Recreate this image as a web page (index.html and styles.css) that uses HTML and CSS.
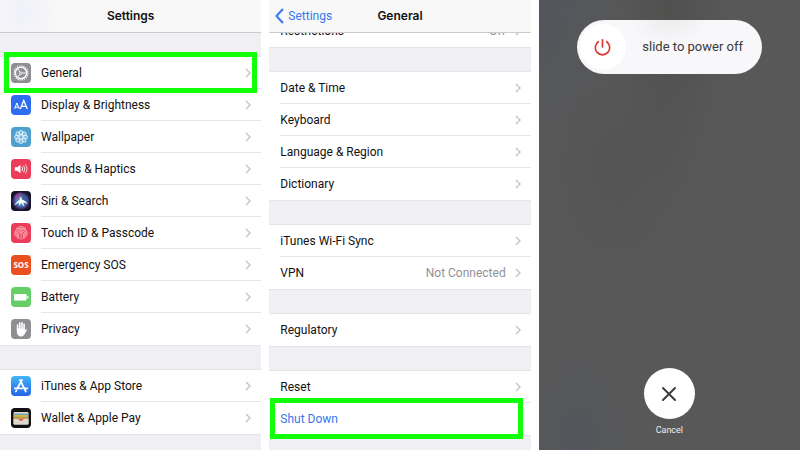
FILE: index.html
```
<!DOCTYPE html>
<html lang="en">
<head>
    <meta charset="UTF-8">
    <meta name="viewport" content="width=device-width, initial-scale=1.0">
    <title>Shut Down from Settings</title>
    <link rel="stylesheet" href="styles.css">
</head>
<body>
    <svg width="0" height="0" class="defs" aria-hidden="true">
        <symbol id="chevron" viewBox="0 0 6 10">
            <path d="M1 1l4 4-4 4" fill="none" stroke="currentColor" stroke-width="1.4"/>
        </symbol>
    </svg>

    <main class="screens">
        <!-- Settings -->
        <section class="screen">
            <header class="navbar tinted"><h1>Settings</h1></header>
            <div class="content">
                <ul class="group first">
                    <li class="highlight"><a class="row" href="#general">
                        <svg class="icon" viewBox="0 0 20 20"><rect width="20" height="20" rx="4" fill="#8e8e93"/><circle cx="10" cy="10" r="7" fill="none" stroke="#fff" stroke-width="1.2" stroke-dasharray="1.2 1"/><circle cx="10" cy="10" r="5.7" fill="none" stroke="#fff" stroke-width="1.5"/><path d="M9.5 10L6.8 5.8M9.5 10L6.8 14.2M10 10h5" stroke="#fff" stroke-width=".9"/><circle cx="10" cy="10" r="1.5" fill="#fff"/><circle cx="10" cy="10" r=".8" fill="#8e8e93"/></svg>
                        <span class="cell"><span>General</span><svg class="chevron"><use href="#chevron"/></svg></span></a></li>
                    <li><a class="row" href="#display">
                        <svg class="icon" viewBox="0 0 20 20"><rect width="20" height="20" rx="4" fill="#2f6df0"/><g fill="none" stroke="#fff"><path d="M3.5 14l2.4-6 2.4 6M4.3 12.2h3.2" stroke-width="1"/><path d="M9.3 14l3.5-8.6 3.5 8.6M10.5 11.4h4.6" stroke-width="1.3"/></g></svg>
                        <span class="cell"><span>Display &amp; Brightness</span><svg class="chevron"><use href="#chevron"/></svg></span></a></li>
                    <li><a class="row" href="#wallpaper">
                        <svg class="icon" viewBox="0 0 20 20"><rect width="20" height="20" rx="4" fill="#4fa0cf"/><g fill="#ffffff44" stroke="#e6f6ff" stroke-width=".8"><circle cx="10" cy="5.5" r="2"/><circle cx="13.2" cy="6.8" r="2"/><circle cx="14.5" cy="10" r="2"/><circle cx="13.2" cy="13.2" r="2"/><circle cx="10" cy="14.5" r="2"/><circle cx="6.8" cy="13.2" r="2"/><circle cx="5.5" cy="10" r="2"/><circle cx="6.8" cy="6.8" r="2"/><circle cx="10" cy="10" r="2.2"/></g></svg>
                        <span class="cell"><span>Wallpaper</span><svg class="chevron"><use href="#chevron"/></svg></span></a></li>
                    <li><a class="row" href="#sounds">
                        <svg class="icon" viewBox="0 0 20 20"><rect width="20" height="20" rx="4" fill="#eb3d59"/><path d="M3.8 8.3h2.4l3.3-2.5v8.4l-3.3-2.5H3.8z" fill="#fff"/><g fill="none" stroke="#fff" stroke-width=".9" stroke-linecap="round"><path d="M11.2 8.2q1.2 1.8 0 3.6"/><path d="M12.9 6.9q2.1 3.1 0 6.2" opacity=".9"/><path d="M14.6 5.6q3 4.4 0 8.8" opacity=".8"/></g></svg>
                        <span class="cell"><span>Sounds &amp; Haptics</span><svg class="chevron"><use href="#chevron"/></svg></span></a></li>
                    <li><a class="row" href="#siri">
                        <svg class="icon" viewBox="0 0 20 20"><defs><radialGradient id="orb"><stop offset="0" stop-color="#e9f6ff"/><stop offset=".35" stop-color="#55a5cc"/><stop offset=".75" stop-color="#4b4590"/><stop offset="1" stop-color="#1c1b38"/></radialGradient></defs><rect width="20" height="20" rx="4" fill="#15152c"/><circle cx="10" cy="10" r="9" fill="url(#orb)"/><path d="M3 6q3-5 8-4-4 3-3 7z" fill="#b3449c" opacity=".65"/><path d="M12 3q5 2 5 8-4-2-6-2z" fill="#37518f" opacity=".8"/><path d="M3 14.5q3-4.5 6.2-5.2L9 5.8l2.2 3q3.5.7 5.8 4.2l-4.7-2 1.2 5.2-3.2-4.6-2.5 3.5.4-3.8z" fill="#fff"/></svg>
                        <span class="cell"><span>Siri &amp; Search</span><svg class="chevron"><use href="#chevron"/></svg></span></a></li>
                    <li><a class="row" href="#touchid">
                        <svg class="icon" viewBox="0 0 20 20"><rect width="20" height="20" rx="4" fill="#eb3d59"/><g fill="none" stroke="#ffc0c9" stroke-width=".8" stroke-linecap="round"><path d="M5.2 5.8q4.8-4.8 9.6 0"/><path d="M3.8 11.5Q3.4 5.3 10 5.2t6.2 6.3"/><path d="M5 13.5Q3.6 6.8 10 6.6t5 6.9"/><path d="M6.4 14.9Q4.6 8.1 10 8t3.6 6.9"/><path d="M7.9 15.8Q6.3 9.5 10 9.4t2.1 6.4"/><path d="M10 10.8v5.5"/></g></svg>
                        <span class="cell"><span>Touch ID &amp; Passcode</span><svg class="chevron"><use href="#chevron"/></svg></span></a></li>
                    <li><a class="row" href="#sos">
                        <svg class="icon" viewBox="0 0 20 20"><rect width="20" height="20" rx="4" fill="#ea501f"/><text x="10" y="13" text-anchor="middle" class="sos">SOS</text></svg>
                        <span class="cell"><span>Emergency SOS</span><svg class="chevron"><use href="#chevron"/></svg></span></a></li>
                    <li><a class="row" href="#battery">
                        <svg class="icon" viewBox="0 0 20 20"><rect width="20" height="20" rx="4" fill="#67ce67"/><rect x="3" y="7" width="12.6" height="6.4" rx="1" fill="#fff"/><path d="M16.2 8.8q1.4.2 1.4 1.4t-1.4 1.4z" fill="#fff"/></svg>
                        <span class="cell"><span>Battery</span><svg class="chevron"><use href="#chevron"/></svg></span></a></li>
                    <li><a class="row" href="#privacy">
                        <svg class="icon" viewBox="0 0 20 20"><rect width="20" height="20" rx="4" fill="#8e8e93"/><path d="M6.6 10.5V6M8.8 9.5V4M11 9.5V3.8M13.1 10V5.2" stroke="#fff" stroke-width="1.6" stroke-linecap="round"/><path d="M5.8 9.5h8.1v2.1l1-1.2q1-.7 1.2.2l-2.7 5q-1 2-3 2H9.2q-3.4-1-3.4-5z" fill="#fff"/></svg>
                        <span class="cell"><span>Privacy</span><svg class="chevron"><use href="#chevron"/></svg></span></a></li>
                </ul>
                <ul class="group">
                    <li><a class="row" href="#appstore">
                        <svg class="icon" viewBox="0 0 20 20"><defs><linearGradient id="store" x2="0" y2="1"><stop stop-color="#43b5f5"/><stop offset="1" stop-color="#2364e8"/></linearGradient></defs><rect width="20" height="20" rx="4" fill="url(#store)"/><g stroke="#fff" stroke-width="1.7" stroke-linecap="round"><path d="M11 4L6.5 12M9 4l5.8 11.5M3.8 12.4h7.4M14 12.4h2.3M5.5 14.4l-.7 1.2"/></g></svg>
                        <span class="cell"><span>iTunes &amp; App Store</span><svg class="chevron"><use href="#chevron"/></svg></span></a></li>
                    <li><a class="row" href="#wallet">
                        <svg class="icon" viewBox="0 0 20 20"><rect width="20" height="20" rx="4" fill="#111"/><rect x="2.5" y="4" width="15" height="12.5" rx="1.2" fill="#ddd9ce"/><path d="M3 5.5h14v2H3z" fill="#6aa5c2"/><path d="M3 7h14v2H3z" fill="#d9b64b"/><path d="M3 8.7h14v2H3z" fill="#a9a450"/><path d="M3 10.4h14v1H3z" fill="#df7d50"/><path d="M2.5 11h4.6q.8 2.4 2.9 2.4t2.9-2.4h4.6v4.3q0 1.2-1.2 1.2H3.7q-1.2 0-1.2-1.2z" fill="#ddd9ce"/><path d="M7.5 11h5q-.7 2-2.5 2t-2.5-2" fill="#df6645"/></svg>
                        <span class="cell"><span>Wallet &amp; Apple Pay</span><svg class="chevron"><use href="#chevron"/></svg></span></a></li>
                </ul>
            </div>
        </section>

        <!-- General -->
        <section class="screen">
            <header class="navbar">
                <a class="back" href="#settings"><svg viewBox="0 0 9 16"><path d="M8 1L1.5 8 8 15" fill="none" stroke="currentColor" stroke-width="2"/></svg>Settings</a>
                <h1>General</h1>
            </header>
            <div class="content scrolled">
                <ul class="group">
                    <li><a class="row" href="#restrictions"><span class="cell"><span>Restrictions</span><span class="value">Off</span><svg class="chevron"><use href="#chevron"/></svg></span></a></li>
                </ul>
                <ul class="group">
                    <li><a class="row" href="#date"><span class="cell"><span>Date &amp; Time</span><svg class="chevron"><use href="#chevron"/></svg></span></a></li>
                    <li><a class="row" href="#keyboard"><span class="cell"><span>Keyboard</span><svg class="chevron"><use href="#chevron"/></svg></span></a></li>
                    <li><a class="row" href="#language"><span class="cell"><span>Language &amp; Region</span><svg class="chevron"><use href="#chevron"/></svg></span></a></li>
                    <li><a class="row" href="#dictionary"><span class="cell"><span>Dictionary</span><svg class="chevron"><use href="#chevron"/></svg></span></a></li>
                </ul>
                <ul class="group">
                    <li><a class="row" href="#sync"><span class="cell"><span>iTunes Wi-Fi Sync</span><svg class="chevron"><use href="#chevron"/></svg></span></a></li>
                    <li><a class="row" href="#vpn"><span class="cell"><span>VPN</span><span class="value">Not Connected</span><svg class="chevron"><use href="#chevron"/></svg></span></a></li>
                </ul>
                <ul class="group">
                    <li><a class="row" href="#regulatory"><span class="cell"><span>Regulatory</span><svg class="chevron"><use href="#chevron"/></svg></span></a></li>
                </ul>
                <ul class="group">
                    <li><a class="row" href="#reset"><span class="cell"><span>Reset</span><svg class="chevron"><use href="#chevron"/></svg></span></a></li>
                    <li class="highlight shutdown"><button class="row" type="button"><span class="cell">Shut Down</span></button></li>
                </ul>
            </div>
        </section>

        <!-- Power off -->
        <section class="screen power">
            <div class="slider">
                <input type="range" id="power-off" min="0" max="100" value="0">
                <label for="power-off">slide to power off</label>
                <svg class="power-icon" viewBox="0 0 16 16"><path d="M4 2.6a6.8 6.8 0 1 0 8 0M8 .8v6.6" fill="none" stroke="#e0352f" stroke-width="1.6" stroke-linecap="round"/></svg>
            </div>
            <div class="cancel">
                <button type="button" id="cancel" aria-labelledby="cancel-label"><svg viewBox="0 0 16 16"><path d="M2 2l12 12M14 2L2 14" stroke="#3c3c3e" stroke-width="2" stroke-linecap="round"/></svg></button>
                <label for="cancel" id="cancel-label">Cancel</label>
            </div>
        </section>
    </main>
</body>
</html>
```

FILE: styles.css
```
* {
    box-sizing: border-box;
}
body {
    margin: 0;
    background-color: white;
    color: #111;
    font-family: Roboto, "Liberation Sans", sans-serif;
    font-size: 12px;
    line-height: 16px;
}
.defs {
    position: absolute;
}
.screens {
    display: grid;
    grid-template-columns: repeat(3, 1fr);
    gap: 8px;
    height: 100vh;
}
.screen {
    display: flex;
    flex-direction: column;
    min-width: 0;
    overflow: hidden;
    background-color: #efeff4;
}
.navbar {
    display: grid;
    grid-template-columns: 1fr auto 1fr;
    align-items: center;
    flex: none;
    height: 33px;
    border-bottom: 1px solid #cbcbcf;
    background-color: #f8f8f8;
    z-index: 1;
}
.navbar.tinted {
    background-image: radial-gradient(circle at 22px 12px, #f0f0fa, #f8f8f8 40px);
}
.navbar h1 {
    grid-column: 2;
    margin: 0;
    font-family: Inter, sans-serif;
    font-size: 12px;
    font-weight: 600;
}
.back {
    display: flex;
    align-items: center;
    gap: 4px;
    padding-left: 6px;
    color: #3579ec;
    text-decoration: none;
}
.back svg {
    width: 9px;
    height: 16px;
}
.content {
    display: flex;
    flex-direction: column;
    gap: 25px;
}
.content.scrolled {
    margin-top: -18px;
}
.group {
    margin: 0;
    padding: 0;
    list-style: none;
    background-color: white;
    box-shadow: 0 0 0 1px #e4e4e9;
}
.group.first {
    margin-top: 24px;
}
.group li {
    position: relative;
}
.row {
    display: flex;
    align-items: center;
    gap: 10px;
    width: 100%;
    height: 32px;
    padding: 0 0 0 11px;
    border: none;
    background: none;
    color: inherit;
    font: inherit;
    text-align: left;
    text-decoration: none;
}
.icon {
    flex: none;
    width: 20px;
    height: 20px;
}
.sos {
    fill: white;
    font-family: "Open Sans", sans-serif;
    font-size: 8px;
    font-weight: 700;
}
.cell {
    display: flex;
    align-items: center;
    flex: 1;
    gap: 9px;
    height: 32px;
    padding-right: 10px;
    border-bottom: 1px solid #e6e6e9;
}
.group li:last-child .cell {
    border-bottom-color: transparent;
}
.chevron {
    width: 6px;
    height: 10px;
    color: #c4c4c8;
}
.cell > :first-child {
    margin-right: auto;
}
.value {
    color: #929296;
}
.highlight::after {
    content: "";
    position: absolute;
    inset: -5px 4px -4px;
    border: 5px solid #12ff0a;
    pointer-events: none;
}
.shutdown {
    color: #3579ec;
}
.shutdown::after {
    inset: -5px 8px -4px 1px;
}
.power {
    justify-content: space-between;
    padding: 20px 38px 12px;
    background-color: #585859;
    background-image:
        radial-gradient(ellipse at 50% 0, #50504f, #50504f00 60px),
        radial-gradient(ellipse at 0 0, #52565c, #52565c00 80px),
        radial-gradient(ellipse at 15% 100%, #52565c, #52565c00 50px),
        radial-gradient(ellipse at 30% 37%, #545454, #54545400 80px);
}
.slider {
    display: grid;
    align-items: center;
    height: 54px;
    border-radius: 27px;
    background-color: #f8f8fb;
    background-image: radial-gradient(ellipse at 50% 0, #ececec, #ececec00 40px);
}
.slider > * {
    grid-area: 1 / 1;
}
.slider input {
    width: 100%;
    height: 54px;
    margin: 0;
    padding: 0 3px;
    appearance: none;
    background: none;
}
.slider input::-webkit-slider-thumb {
    appearance: none;
    width: 46px;
    height: 46px;
    border-radius: 50%;
    background-color: white;
}
.slider label {
    padding-right: 19px;
    color: #38383a;
    font-size: 13px;
    text-align: right;
    pointer-events: none;
}
.power-icon {
    width: 17px;
    height: 17px;
    margin-left: 17px;
    pointer-events: none;
}
.cancel {
    display: flex;
    flex-direction: column;
    align-items: center;
    gap: 3px;
    color: #eee;
    font-size: 9px;
}
.cancel button {
    display: grid;
    place-items: center;
    width: 51px;
    height: 51px;
    padding: 0;
    border: none;
    border-radius: 50%;
    background-color: white;
}
.cancel svg {
    width: 16px;
    height: 16px;
}
```
